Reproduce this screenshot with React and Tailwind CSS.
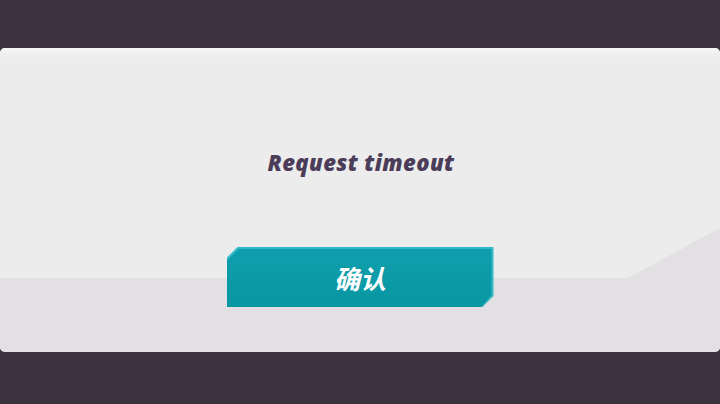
import React from 'react'

function App() {
  return (
    <div className="h-[404px] w-[720px] bg-[#3b3340] pt-[48px] pb-[52px]">
      <div className="relative h-full w-full overflow-hidden rounded-[5px] bg-[#ececec]">
        {/* lower band decor */}
        <svg className="absolute inset-0" width="720" height="304" viewBox="0 0 720 304">
          <defs>
            <linearGradient id="top" x1="0" y1="0" x2="0" y2="1">
              <stop offset="0" stopColor="#f6f6f6" />
              <stop offset="1" stopColor="#ececec" />
            </linearGradient>
          </defs>
          <rect x="0" y="0" width="720" height="10" fill="url(#top)" />
          <polygon points="0,230 628,230 720,180 720,304 0,304" fill="#e2e0e3" />
        </svg>

        <div className="relative flex h-full flex-col items-center pt-[99px]">
          <p
            className="h-[30px] pl-[2px] text-[22px] font-extrabold italic leading-[30px] tracking-[0.4px] text-[#4b3d59]"
            style={{ fontFamily: '"Open Sans", "Noto Sans", sans-serif' }}
          >
            Request timeout
          </p>

          <button
            className="mt-[70px] h-[60px] w-[267px] bg-[#33bcc7] p-0 [clip-path:polygon(11px_0,100%_0,100%_calc(100%-11px),calc(100%-11px)_100%,0_100%,0_11px)]"
          >
            <div className="flex h-full w-full items-center justify-center bg-gradient-to-b from-[#0f9fac] to-[#0a96a3] [clip-path:polygon(12px_2px,calc(100%-2px)_2px,calc(100%-2px)_calc(100%-12px),calc(100%-12px)_100%,0_100%,0_14px)]">
              <span
                className="text-[26px] font-bold italic text-white"
                style={{ fontFamily: '"Noto Sans CJK SC", sans-serif' }}
              >
                确认
              </span>
            </div>
          </button>
        </div>
      </div>
    </div>
  )
}

export default App
